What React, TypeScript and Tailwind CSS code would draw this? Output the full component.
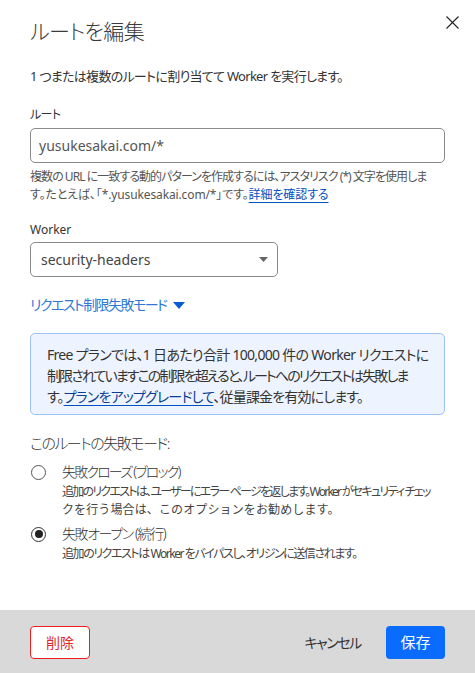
import React from "react";

const font = {
  fontFamily: '"Segoe UI", "Noto Sans", "Noto Sans CJK JP", sans-serif',
};

export default function App() {
  return (
    <div
      className="relative flex h-[673px] w-[475px] flex-col overflow-hidden bg-white text-[#333] [font-feature-settings:'palt']"
      style={font}
    >
      <button className="absolute right-[15px] top-[14px] flex h-[16px] w-[16px] items-center justify-center">
        <svg width="13" height="13" viewBox="0 0 13 13">
          <path d="M0.5 0.5 L12.5 12.5 M12.5 0.5 L0.5 12.5" stroke="#222" strokeWidth="1.1" fill="none" />
        </svg>
      </button>

      <div className="px-[30px]">
        <h1 className="pt-[17px] text-[21px] font-light leading-[28px] tracking-[-0.03em] text-[#3a3a3a]">ルートを編集</h1>

        <p className="mt-[21px] whitespace-nowrap text-[13px] leading-[20px] tracking-[-0.055em] text-[#333]">
          1 つまたは複数のルートに割り当てて Worker を実行します。
        </p>

        <div className="mt-[21px] text-[12px] leading-[16px] tracking-[-0.05em] text-[#333]">ルート</div>
        <div className="mt-[5px] flex h-[35px] items-center rounded-[5px] border border-[#8a8a8a] px-[8px] text-[14px] text-[#555]">
          yusukesakai.com/*
        </div>
        <p className="mt-[5px] whitespace-nowrap text-[12px] leading-[18px] text-[#555]">
          <span className="block tracking-[-0.08em]">
            複数の URL に一致する動的パターンを作成するには、アスタリスク (*) 文字を使用しま
          </span>
          <span className="block tracking-[-0.01em]">
            す。たとえば、「*.yusukesakai.com/*」です。
            <a className="text-[#0051c3] underline decoration-[#0051c3] underline-offset-[3px]">詳細を確認する</a>
          </span>
        </p>

        <div className="mt-[18px] text-[12px] leading-[16px] text-[#333]">Worker</div>
        <div className="mt-[4px] flex h-[35px] w-[248px] items-center justify-between rounded-[5px] border border-[#8a8a8a] pl-[10px] pr-[9px] text-[14px] text-[#444]">
          <span>security-headers</span>
          <svg width="9" height="5" viewBox="0 0 9 5">
            <path d="M0 0 H9 L4.5 5 Z" fill="#666" />
          </svg>
        </div>

        <div className="mt-[18px] flex items-center whitespace-nowrap text-[14px] leading-[20px] tracking-[-0.11em] text-[#2f78d6]">
          <span>リクエスト制限失敗モード</span>
          <svg className="ml-[6px]" width="12" height="7" viewBox="0 0 12 7">
            <path d="M0 0 H12 L6 7 Z" fill="#0b5bd3" />
          </svg>
        </div>

        <div className="mt-[18px] whitespace-nowrap rounded-[5px] border border-[#9cc2f7] bg-[#edf4ff] pb-[7px] pl-[16px] pr-[10px] pt-[10px] text-[14px] leading-[21px] text-[#333]">
          <span className="block tracking-[-0.05em]">
            Free プランでは、1 日あたり合計 100,000 件の Worker リクエストに
          </span>
          <span className="block tracking-[-0.135em]">
            制限されていますこの制限を超えると、ルートへのリクエストは失敗しま
          </span>
          <span className="block tracking-[-0.06em]">
            す。
            <a className="text-[#0b3d91] underline decoration-[#0051c3] underline-offset-[3px]">プランをアップグレードして</a>
            、従量課金を有効にします。
          </span>
        </div>

        <div className="mt-[17px] text-[15px] font-light leading-[22px] tracking-[-0.1em] text-[#333]">このルートの失敗モード:</div>

        <div className="mt-[8px] flex">
          <div className="flex h-[20px] w-[32px] shrink-0 items-center">
            <span className="ml-[1px] h-[15px] w-[15px] rounded-full border border-[#555]" />
          </div>
          <div>
            <div className="whitespace-nowrap text-[14px] font-light leading-[20px] tracking-[-0.13em] text-[#333]">失敗クローズ (ブロック)</div>
            <p className="mt-[1px] whitespace-nowrap text-[12px] leading-[18px] text-[#444]">
              <span className="block tracking-[-0.145em]">
                追加のリクエストは、ユーザーにエラー ページを返します。Worker がセキュリティ チェッ
              </span>
              <span className="block tracking-[0.01em] [font-feature-settings:normal]">クを行う場合は、このオプションをお勧めします。</span>
            </p>
          </div>
        </div>

        <div className="mt-[5px] flex">
          <div className="flex h-[20px] w-[32px] shrink-0 items-center">
            <span className="ml-[1px] flex h-[15px] w-[15px] items-center justify-center rounded-full border border-[#333]">
              <span className="h-[8px] w-[8px] rounded-full bg-[#222]" />
            </span>
          </div>
          <div>
            <div className="whitespace-nowrap text-[14px] font-light leading-[20px] tracking-[-0.1em] text-[#333]">失敗オープン (続行)</div>
            <p className="mt-[1px] whitespace-nowrap text-[12px] leading-[18px] tracking-[-0.12em] text-[#444]">
              追加のリクエストは Worker をバイパスし、オリジンに送信されます。
            </p>
          </div>
        </div>
      </div>

      <div className="mt-auto flex h-[63px] shrink-0 items-start bg-[#d9d9d9] px-[30px] pt-[16px]">
        <button className="flex h-[33px] w-[60px] items-center justify-center rounded-[4px] border border-[#ee1c1c] bg-white text-[14px] text-[#e0282b]">
          削除
        </button>
        <div className="ml-auto flex items-center">
          <button className="mr-[25px] h-[33px] whitespace-nowrap text-[14px] tracking-[-0.1em] text-[#333]">キャンセル</button>
          <button className="flex h-[33px] w-[59px] items-center justify-center rounded-[4px] bg-[#0a6cff] text-[15px] text-white">
            保存
          </button>
        </div>
      </div>
    </div>
  );
}
